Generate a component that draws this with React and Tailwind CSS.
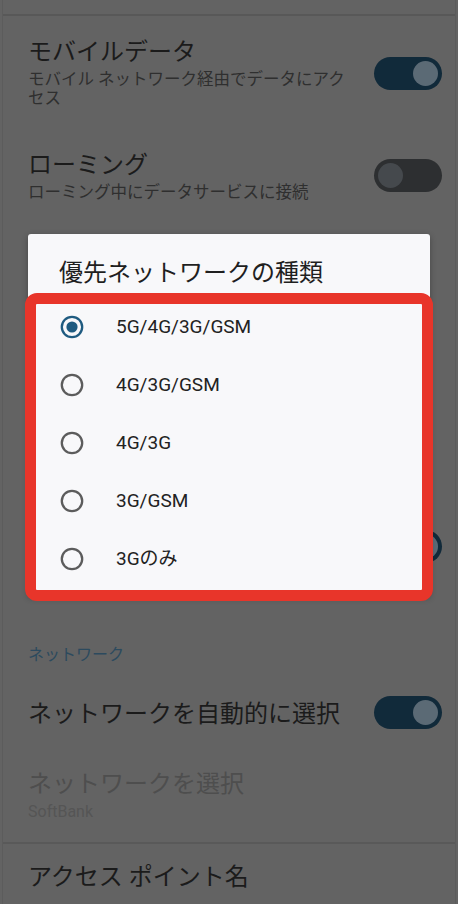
import React from "react";

function Toggle({ on, className = "" }) {
  return (
    <div
      className={`flex h-[33px] w-[68px] shrink-0 items-center rounded-full px-[4px] ${
        on ? "justify-end bg-[#112a3a]" : "justify-start bg-[#2d2f31]"
      } ${className}`}
    >
      <div
        className={`h-[25px] w-[25px] rounded-full ${on ? "bg-[#5b6a75]" : "bg-[#45494d]"}`}
      />
    </div>
  );
}

function Radio({ checked }) {
  return (
    <svg width="24" height="24" viewBox="0 0 24 24" className="shrink-0">
      <circle
        cx="12"
        cy="12"
        r="10.2"
        fill="none"
        stroke={checked ? "#1f5b80" : "#5c5c5c"}
        strokeWidth="2.3"
      />
      {checked && <circle cx="12" cy="12" r="5.6" fill="#1f5b80" />}
    </svg>
  );
}

const options = ["5G/4G/3G/GSM", "4G/3G/GSM", "4G/3G", "3G/GSM", "3Gのみ"];

export default function App() {
  return (
    <div className="relative h-[904px] w-[458px] overflow-hidden bg-[#636363] font-['Roboto','Noto_Sans_CJK_JP',sans-serif]">
      <div className="ml-[2px] flex h-full w-[454px] flex-col border-x border-[#5c5c5c]">
        <div className="h-[14px] shrink-0" />
        <div className="h-[2px] shrink-0 bg-[#585858]" />

        {/* Mobile data */}
        <div className="mt-[22px] flex items-center pl-[25px] pr-[13px]">
          <div className="w-[330px]">
            <div className="text-[24px] leading-[28px] text-[#1b1b1b]">モバイルデータ</div>
            <div className="mt-[4px] text-[16.5px] leading-[19px] text-[#2f2f2f]">
              モバイル ネットワーク経由でデータにアク
              <br />
              セス
            </div>
          </div>
          <div className="flex-1" />
          <Toggle on />
        </div>

        {/* Roaming */}
        <div className="mt-[43px] flex items-center pl-[25px] pr-[13px]">
          <div>
            <div className="text-[24px] leading-[28px] text-[#1b1b1b]">ローミング</div>
            <div className="mt-[4px] text-[16.5px] leading-[19px] text-[#2f2f2f]">
              ローミング中にデータサービスに接続
            </div>
          </div>
          <div className="flex-1" />
          <Toggle className="-mt-[3px]" />
        </div>

        {/* row hidden behind the dialog */}
        <div className="mt-[328px] flex justify-end pr-[13px]">
          <Toggle on />
        </div>

        {/* Network section */}
        <div className="mt-[82px] pl-[25px] text-[16px] leading-[20px] text-[#2c4a5e]">ネットワーク</div>

        <div className="mt-[33px] flex items-center pl-[25px] pr-[13px]">
          <div className="text-[24px] leading-[28px] text-[#1b1b1b]">ネットワークを自動的に選択</div>
          <div className="flex-1" />
          <Toggle on className="-mt-[2px]" />
        </div>

        <div className="mt-[41px] pl-[25px]">
          <div className="text-[24px] leading-[28px] text-[#4e4e4e]">ネットワークを選択</div>
          <div className="mt-[4px] text-[16px] leading-[20px] text-[#555555]">SoftBank</div>
        </div>

        <div className="mt-[20px] h-[2px] shrink-0 bg-[#595959]" />

        <div className="mt-[19px] pl-[25px] text-[24px] leading-[28px] text-[#1b1b1b]">
          アクセス ポイント名
        </div>
      </div>

      {/* Dialog */}
      <div className="absolute left-[28px] top-[234px] w-[402px] rounded-[3px] bg-[#f8f8fa] pb-[8px] shadow-[0_2px_6px_rgba(0,0,0,0.3)]">
        <div className="pl-[31px] pt-[25px] text-[24px] leading-[28px] text-[#1f1f1f]">
          優先ネットワークの種類
        </div>
        <div className="mt-[11px] flex flex-col">
          {options.map((o, i) => (
            <div key={o} className="flex h-[58px] items-center pl-[32px]">
              <Radio checked={i === 0} />
              <span className="ml-[32px] text-[19px] text-[#222222]">{o}</span>
            </div>
          ))}
        </div>
      </div>

      {/* Red highlight annotation */}
      <div className="pointer-events-none absolute left-[25px] top-[293px] h-[308px] w-[408px] rounded-[12px] border-[11px] border-[#e8352a]" />
    </div>
  );
}
